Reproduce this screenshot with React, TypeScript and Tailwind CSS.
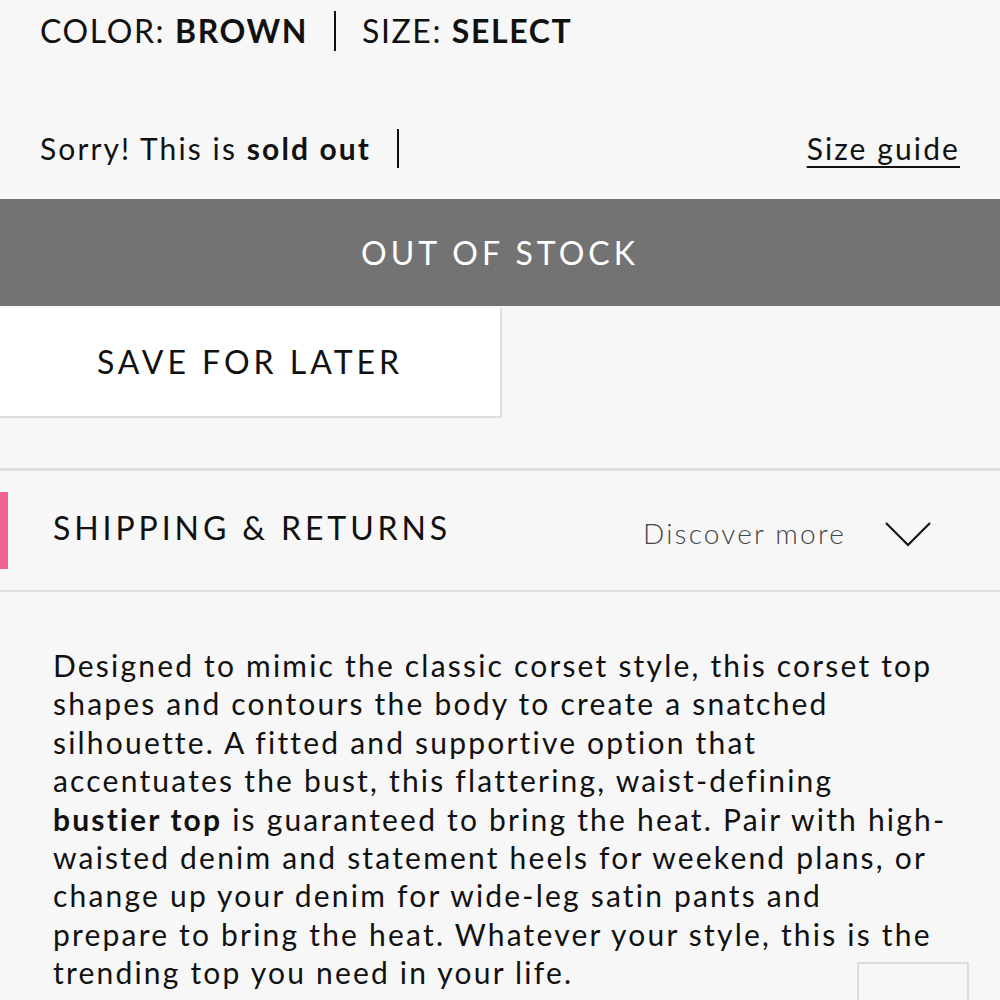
import React from 'react'

const App = () => {
  return (
    <div
      className="relative w-[1000px] h-[1000px] overflow-hidden bg-[#f7f7f7] text-[#111]"
      style={{ fontFamily: 'Lato, "Open Sans", sans-serif' }}
    >
      {/* Options */}
      <div className="flex items-center h-[62px] pl-[40px] text-[32px] tracking-[1.6px]">
        <span>
          COLOR: <b className="font-bold">BROWN</b>
        </span>
        <span className="mx-[26px] w-[2px] h-[40px] bg-[#111]"></span>
        <span>
          SIZE: <b className="font-bold">SELECT</b>
        </span>
      </div>

      <div className="flex items-center justify-between h-[56px] mt-[58px] pl-[40px] pr-[40px] text-[30px] tracking-[2.1px]">
        <div className="flex items-center">
          <span>
            Sorry! This is <b className="font-bold">sold out</b>
          </span>
          <span className="ml-[26px] w-[2px] h-[39px] bg-[#111]"></span>
        </div>
        <a className="underline underline-offset-[6px] decoration-[2px]">Size guide</a>
      </div>

      {/* Buttons */}
      <div className="mt-[23px] h-[107px] bg-[#737373] flex items-center justify-center text-white text-[32px] tracking-[4px]">
        OUT OF STOCK
      </div>
      <div className="mt-[2px] w-[502px] h-[110px] bg-white border-r-2 border-b-2 border-[#dedede] flex items-center justify-center text-[32px] tracking-[4px]">
        SAVE FOR LATER
      </div>

      {/* Accordion */}
      <div className="mt-[50px] border-t-[3px] border-b-2 border-[#e0e0e0] h-[124px] flex items-center">
        <span className="w-[8px] h-[77px] bg-[#f06292]"></span>
        <span className="ml-[45px] mb-[6px] text-[32px] tracking-[3.9px]">SHIPPING &amp; RETURNS</span>
        <span className="ml-auto mt-[4px] text-[28px] text-[#444] font-light tracking-[2.2px]">Discover more</span>
        <svg className="ml-[38px] mr-[68px] mt-[6px]" width="48" height="26" viewBox="0 0 48 26" fill="none">
          <path d="M2 2 L24 24 L46 2" stroke="#111" strokeWidth="2.2" />
        </svg>
      </div>

      {/* Description */}
      <div className="pl-[53px] pr-[10px] pt-[54px] text-[30px] leading-[38.4px] tracking-[2.2px]">
        <p>
          Designed to mimic the classic corset style, this corset top
          <br />
          shapes and contours the body to create a snatched
          <br />
          silhouette. A fitted and supportive option that
          <br />
          accentuates the bust, this flattering, waist-defining
          <br />
          <b className="font-bold">bustier top</b> is guaranteed to bring the heat. Pair with high-
          <br />
          waisted denim and statement heels for weekend plans, or
          <br />
          change up your denim for wide-leg satin pants and
          <br />
          prepare to bring the heat. Whatever your style, this is the
          <br />
          trending top you need in your life.
        </p>
        <p>Style: Crop Top</p>
      </div>

      {/* Back to top */}
      <div className="absolute left-[857px] top-[962px] w-[112px] h-[112px] border-2 border-[#dcdcdc] bg-[#f7f7f7]"></div>
    </div>
  )
}

export default App
